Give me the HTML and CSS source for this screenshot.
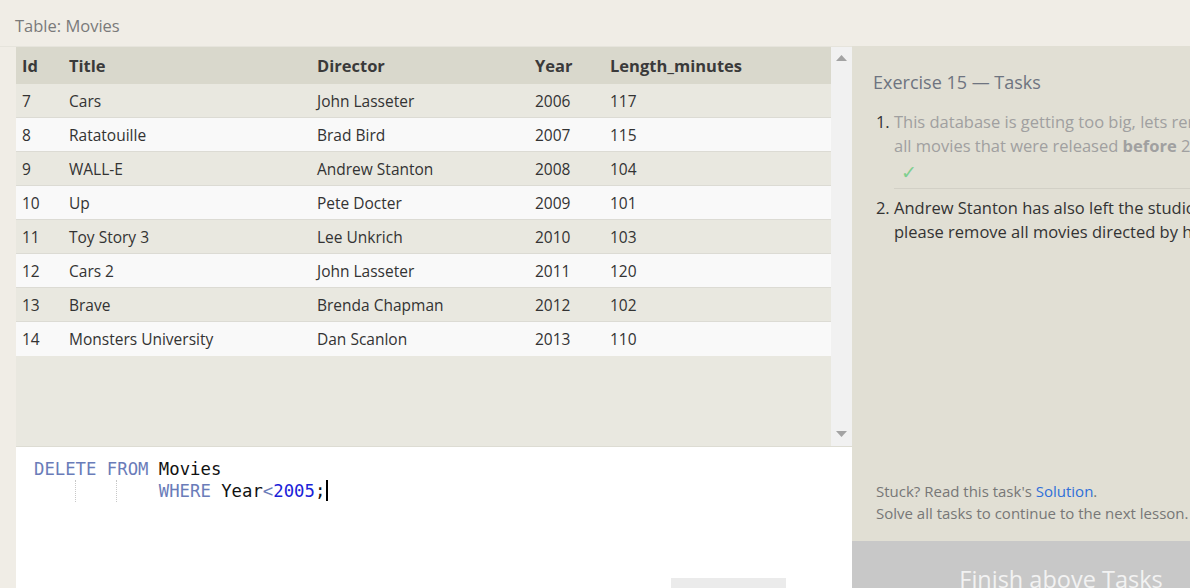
FILE: index.html
```html
<!DOCTYPE html>
<html>
<head>
<meta charset="utf-8">
<link rel="stylesheet" href="styles.css">
</head>
<body>
<div class="page">
  <div class="caption">Table: Movies</div>
  <div class="workspace">
    <div class="left">
      <div class="table-pane">
        <div class="table-scroll">
          <table class="results">
            <colgroup>
              <col class="c-id"><col class="c-title"><col class="c-dir"><col class="c-year"><col class="c-len">
            </colgroup>
            <thead>
              <tr><th>Id</th><th>Title</th><th>Director</th><th>Year</th><th>Length_minutes</th></tr>
            </thead>
            <tbody>
              <tr><td>7</td><td>Cars</td><td>John Lasseter</td><td>2006</td><td>117</td></tr>
              <tr><td>8</td><td>Ratatouille</td><td>Brad Bird</td><td>2007</td><td>115</td></tr>
              <tr><td>9</td><td>WALL-E</td><td>Andrew Stanton</td><td>2008</td><td>104</td></tr>
              <tr><td>10</td><td>Up</td><td>Pete Docter</td><td>2009</td><td>101</td></tr>
              <tr><td>11</td><td>Toy Story 3</td><td>Lee Unkrich</td><td>2010</td><td>103</td></tr>
              <tr><td>12</td><td>Cars 2</td><td>John Lasseter</td><td>2011</td><td>120</td></tr>
              <tr><td>13</td><td>Brave</td><td>Brenda Chapman</td><td>2012</td><td>102</td></tr>
              <tr><td>14</td><td>Monsters University</td><td>Dan Scanlon</td><td>2013</td><td>110</td></tr>
            </tbody>
          </table>
        </div>
        <div class="scrollbar">
          <svg class="arrow" width="11" height="6" viewBox="0 0 11 6"><path d="M0 6 L5.5 0 L11 6 Z" fill="#a3a3a3"/></svg>
          <svg class="arrow" width="11" height="6" viewBox="0 0 11 6"><path d="M0 0 L11 0 L5.5 6 Z" fill="#a3a3a3"/></svg>
        </div>
      </div>
      <div class="editor">
        <div class="code-line"><span class="kw">DELETE</span> <span class="kw">FROM</span> Movies</div>
        <div class="code-line"><span class="indent"></span><span class="indent"></span><span class="pad"></span><span class="kw">WHERE</span> Year<span class="op">&lt;</span><span class="num">2005</span>;<span class="cursor"></span></div>
        <div class="run-btn"></div>
      </div>
    </div>
    <div class="right">
      <div class="tasks-title">Exercise 15 — Tasks</div>
      <ol class="tasks">
        <li class="done">This database is getting too big, lets remove all movies that were released <b>before</b> 2005.
          <div class="check">✓</div>
        </li>
        <li>Andrew Stanton has also left the studio, so please remove all movies directed by him.</li>
      </ol>
      <div class="help">
        <div>Stuck? Read this task's <a class="link">Solution</a>.</div>
        <div>Solve all tasks to continue to the next lesson.</div>
      </div>
      <div class="finish">Finish above Tasks</div>
    </div>
  </div>
</div>
</body>
</html>
```

FILE: styles.css
```css
html, body {
  margin: 0;
  padding: 0;
}
body {
  background: #f0ede6;
  width: 1190px;
  height: 588px;
  overflow: hidden;
  font-family: "Segoe UI", "Open Sans", "Noto Sans", sans-serif;
}
.page {
  display: flex;
  flex-direction: column;
  height: 588px;
}
.caption {
  height: 47px;
  padding-left: 15px;
  box-sizing: border-box;
  padding-top: 15px;
  font-size: 16.5px;
  line-height: 22px;
  color: #7a7a7a;
  border-bottom: 1px solid #e6e4dc;
}
.workspace {
  display: flex;
  flex: 1;
  padding-left: 16px;
  min-height: 0;
}
.left {
  width: 836px;
  flex-shrink: 0;
  display: flex;
  flex-direction: column;
}
.table-pane {
  height: 399px;
  display: flex;
  background: #e9e8e0;
  border-bottom: 1px solid #dddcd3;
}
.table-scroll {
  flex: 1;
}
.scrollbar {
  width: 21px;
  background: #f1f1f1;
  display: flex;
  flex-direction: column;
  justify-content: space-between;
  align-items: center;
  padding: 8px 0 9px;
  box-sizing: border-box;
}
.arrow {
  display: block;
}
.results {
  border-collapse: collapse;
  width: 815px;
  table-layout: fixed;
  font-size: 15.5px;
  color: #333;
}
.c-id { width: 47px; }
.c-title { width: 248px; }
.c-dir { width: 218px; }
.c-year { width: 75px; }
.c-len { width: 227px; }
.results th {
  background: #d9d8cc;
  height: 37px;
  text-align: left;
  font-weight: 700;
  font-size: 16.5px;
  padding: 0 6px;
  color: #3a3a3a;
}
.results td {
  height: 33px;
  padding: 0 6px;
  border-bottom: 1px solid #dcdbd4;
  white-space: nowrap;
}
.results tbody tr:nth-child(odd) td { background: #e9e8e0; }
.results tbody tr:nth-child(even) td { background: #f9f9f9; }
.results tbody tr:last-child td { border-bottom: none; height: 34px; }

.editor {
  flex: 1;
  background: #fff;
  padding: 11px 0 0 18px;
  font-family: "DejaVu Sans Mono", "Liberation Mono", monospace;
  font-size: 17.3px;
  line-height: 22px;
  color: #111;
  display: flex;
  flex-direction: column;
  width: 836px;
  box-sizing: border-box;
}
.code-line {
  white-space: pre;
  height: 22px;
}
.kw { color: #6a7cb9; }
.op { color: #6a7cb9; }
.num { color: #1a22d8; }
.indent {
  display: inline-block;
  vertical-align: top;
  width: 41.6px;
  height: 22px;
  border-right: 1px dotted #c8c8c8;
  box-sizing: border-box;
}
.pad {
  display: inline-block;
  vertical-align: top;
  width: 41.6px;
  height: 22px;
}
.cursor {
  display: inline-block;
  vertical-align: top;
  width: 2px;
  height: 21px;
  background: #000;
  margin-left: 1px;
}
.run-btn {
  margin-top: auto;
  margin-left: 637px;
  width: 115px;
  height: 10px;
  background: #ebebeb;
}

.right {
  width: 418px;
  flex-shrink: 0;
  background: #e1dfd4;
  display: flex;
  flex-direction: column;
  margin-top: -1px;
}
.tasks-title {
  padding: 24px 0 0 21px;
  font-size: 18px;
  line-height: 24px;
  color: #6e7480;
}
.tasks {
  margin: 16px 0 0 0;
  padding: 0 20px 0 42px;
  font-size: 16.5px;
  line-height: 24px;
  color: #333;
}
.tasks li::marker {
  color: #333;
}
.tasks li.done {
  color: #a0a0a0;
  border-bottom: 1px solid #d2d0c6;
  padding-bottom: 4px;
  margin-bottom: 7px;
}
.check {
  color: #7fcf8f;
  padding: 2px 0 0 7px;
  font-size: 19px;
  line-height: 24px;
}
.help {
  margin-top: auto;
  padding: 0 0 17px 24px;
  font-size: 15px;
  line-height: 22px;
  color: #777;
}
.link {
  color: #2f6fd9;
}
.finish {
  height: 47px;
  background: #c8c8c8;
  color: #f2f2f2;
  font-size: 23.5px;
  text-align: center;
  line-height: 76px;
  overflow: hidden;
  flex-shrink: 0;
}
```
